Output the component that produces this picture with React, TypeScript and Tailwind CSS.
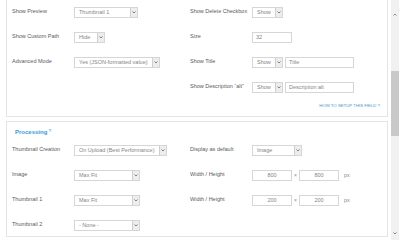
import React from "react";

const font = { fontFamily: '"Liberation Sans", Arial, sans-serif' };

function Chevron({ up = false }: { up?: boolean }) {
  return (
    <svg width="4" height="3" viewBox="0 0 4 3" className="block">
      {up ? (
        <path d="M0.5 2.5 L2 1 L3.5 2.5" fill="none" stroke="#777" strokeWidth="0.8" />
      ) : (
        <path d="M0.5 0.5 L2 2 L3.5 0.5" fill="none" stroke="#666" strokeWidth="0.8" />
      )}
    </svg>
  );
}

function Select({ text, w }: { text: string; w: string }) {
  return (
    <div className={`flex h-[11px] ${w} items-stretch border border-[#d6d6d6] bg-white`}>
      <span className="flex flex-1 items-center pl-[4px] text-[5.5px] leading-none text-[#858585]">{text}</span>
      <span className="flex w-[7px] items-center justify-center border-l border-[#cfcfcf] bg-[#ededed]">
        <Chevron />
      </span>
    </div>
  );
}

function Input({ value, w, center = false }: { value: string; w: string; center?: boolean }) {
  return (
    <div
      className={`flex h-[11px] ${w} items-center border border-[#d6d6d6] bg-white text-[5.5px] leading-none text-[#858585] ${
        center ? "justify-center" : "pl-[3px]"
      }`}
    >
      {value}
    </div>
  );
}

function Label({ children }: { children: React.ReactNode }) {
  return <span className="mb-[2px] w-[62px] shrink-0 text-[5.5px] leading-none text-[#5a5a5a]">{children}</span>;
}

function Row({ left, right }: { left?: [string, React.ReactNode]; right?: [string, React.ReactNode] }) {
  return (
    <div className="flex h-[11px]">
      <div className="flex w-[178px] items-center">
        {left && (
          <>
            <Label>{left[0]}</Label>
            {left[1]}
          </>
        )}
      </div>
      <div className="flex items-center">
        {right && (
          <>
            <Label>{right[0]}</Label>
            {right[1]}
          </>
        )}
      </div>
    </div>
  );
}

function WH({ a, b }: { a: string; b: string }) {
  return (
    <div className="flex items-center">
      <Input value={a} w="w-[40px]" center />
      <span className="w-[7px] text-center text-[5px] leading-none text-[#888]">×</span>
      <Input value={b} w="w-[40px]" center />
      <span className="ml-[5px] text-[5.5px] leading-none text-[#888]">px</span>
    </div>
  );
}

export default function App() {
  return (
    <div className="flex h-[250px] w-[401px] overflow-hidden bg-white" style={font}>
      <div className="ml-[6px] flex w-[382px] flex-col">
        <div className="flex flex-col border-x border-b border-[#e4e4e4] bg-white pb-[8px] pl-[5px] pr-[7px] pt-[7px]">
          <div className="flex flex-col gap-[14px]">
            <Row
              left={["Show Preview", <Select text="Thumbnail 1" w="w-[64px]" />]}
              right={["Show Delete Checkbox", <Select text="Show" w="w-[31px]" />]}
            />
            <Row
              left={["Show Custom Path", <Select text="Hide" w="w-[31px]" />]}
              right={["Size", <Input value="32" w="w-[40px]" />]}
            />
            <Row
              left={["Advanced Mode", <Select text="Yes (JSON-formatted value)" w="w-[86px]" />]}
              right={[
                "Show Title",
                <div className="flex gap-[2px]">
                  <Select text="Show" w="w-[31px]" />
                  <Input value="Title" w="w-[69px]" />
                </div>,
              ]}
            />
            <Row
              right={[
                "Show Description \u201calt\u201d",
                <div className="flex gap-[2px]">
                  <Select text="Show" w="w-[31px]" />
                  <Input value="Description alt" w="w-[69px]" />
                </div>,
              ]}
            />
          </div>
          <div className="mt-[10px] text-right text-[4.3px] leading-[5px] text-[#3b95cf]">HOW TO SETUP THIS FIELD ?</div>
        </div>

        <div className="mt-[4px] flex flex-col border border-[#e4e4e4] bg-white pb-[5px] pl-[5px] pr-[7px] pt-[7px]">
          <div className="ml-[3px] flex items-start text-[6px] font-bold leading-[6px] text-[#3b9ad6]">
            Processing<span className="ml-[1.5px] text-[4px] leading-[4px]">?</span>
          </div>
          <div className="mt-[10px] flex flex-col gap-[14px]">
            <Row
              left={["Thumbnail Creation", <Select text="On Upload (Best Performance)" w="w-[93px]" />]}
              right={["Display as default", <Select text="Image" w="w-[50px]" />]}
            />
            <Row
              left={["Image", <Select text="Max Fit" w="w-[66px]" />]}
              right={["Width / Height", <WH a="800" b="800" />]}
            />
            <Row
              left={["Thumbnail 1", <Select text="Max Fit" w="w-[66px]" />]}
              right={["Width / Height", <WH a="200" b="200" />]}
            />
            <Row left={["Thumbnail 2", <Select text="- None -" w="w-[66px]" />]} />
          </div>
        </div>
      </div>

      <div className="ml-[3px] flex h-[240px] w-[8px] flex-col items-center bg-[#f1f1f1]">
        <div className="mt-[13px]">
          <Chevron up />
        </div>
        <div className="mt-[55px] h-[65px] w-[8px] bg-[#c9c9c9]" />
        <div className="flex-1" />
        <div className="mb-[5px]">
          <Chevron />
        </div>
      </div>
    </div>
  );
}
